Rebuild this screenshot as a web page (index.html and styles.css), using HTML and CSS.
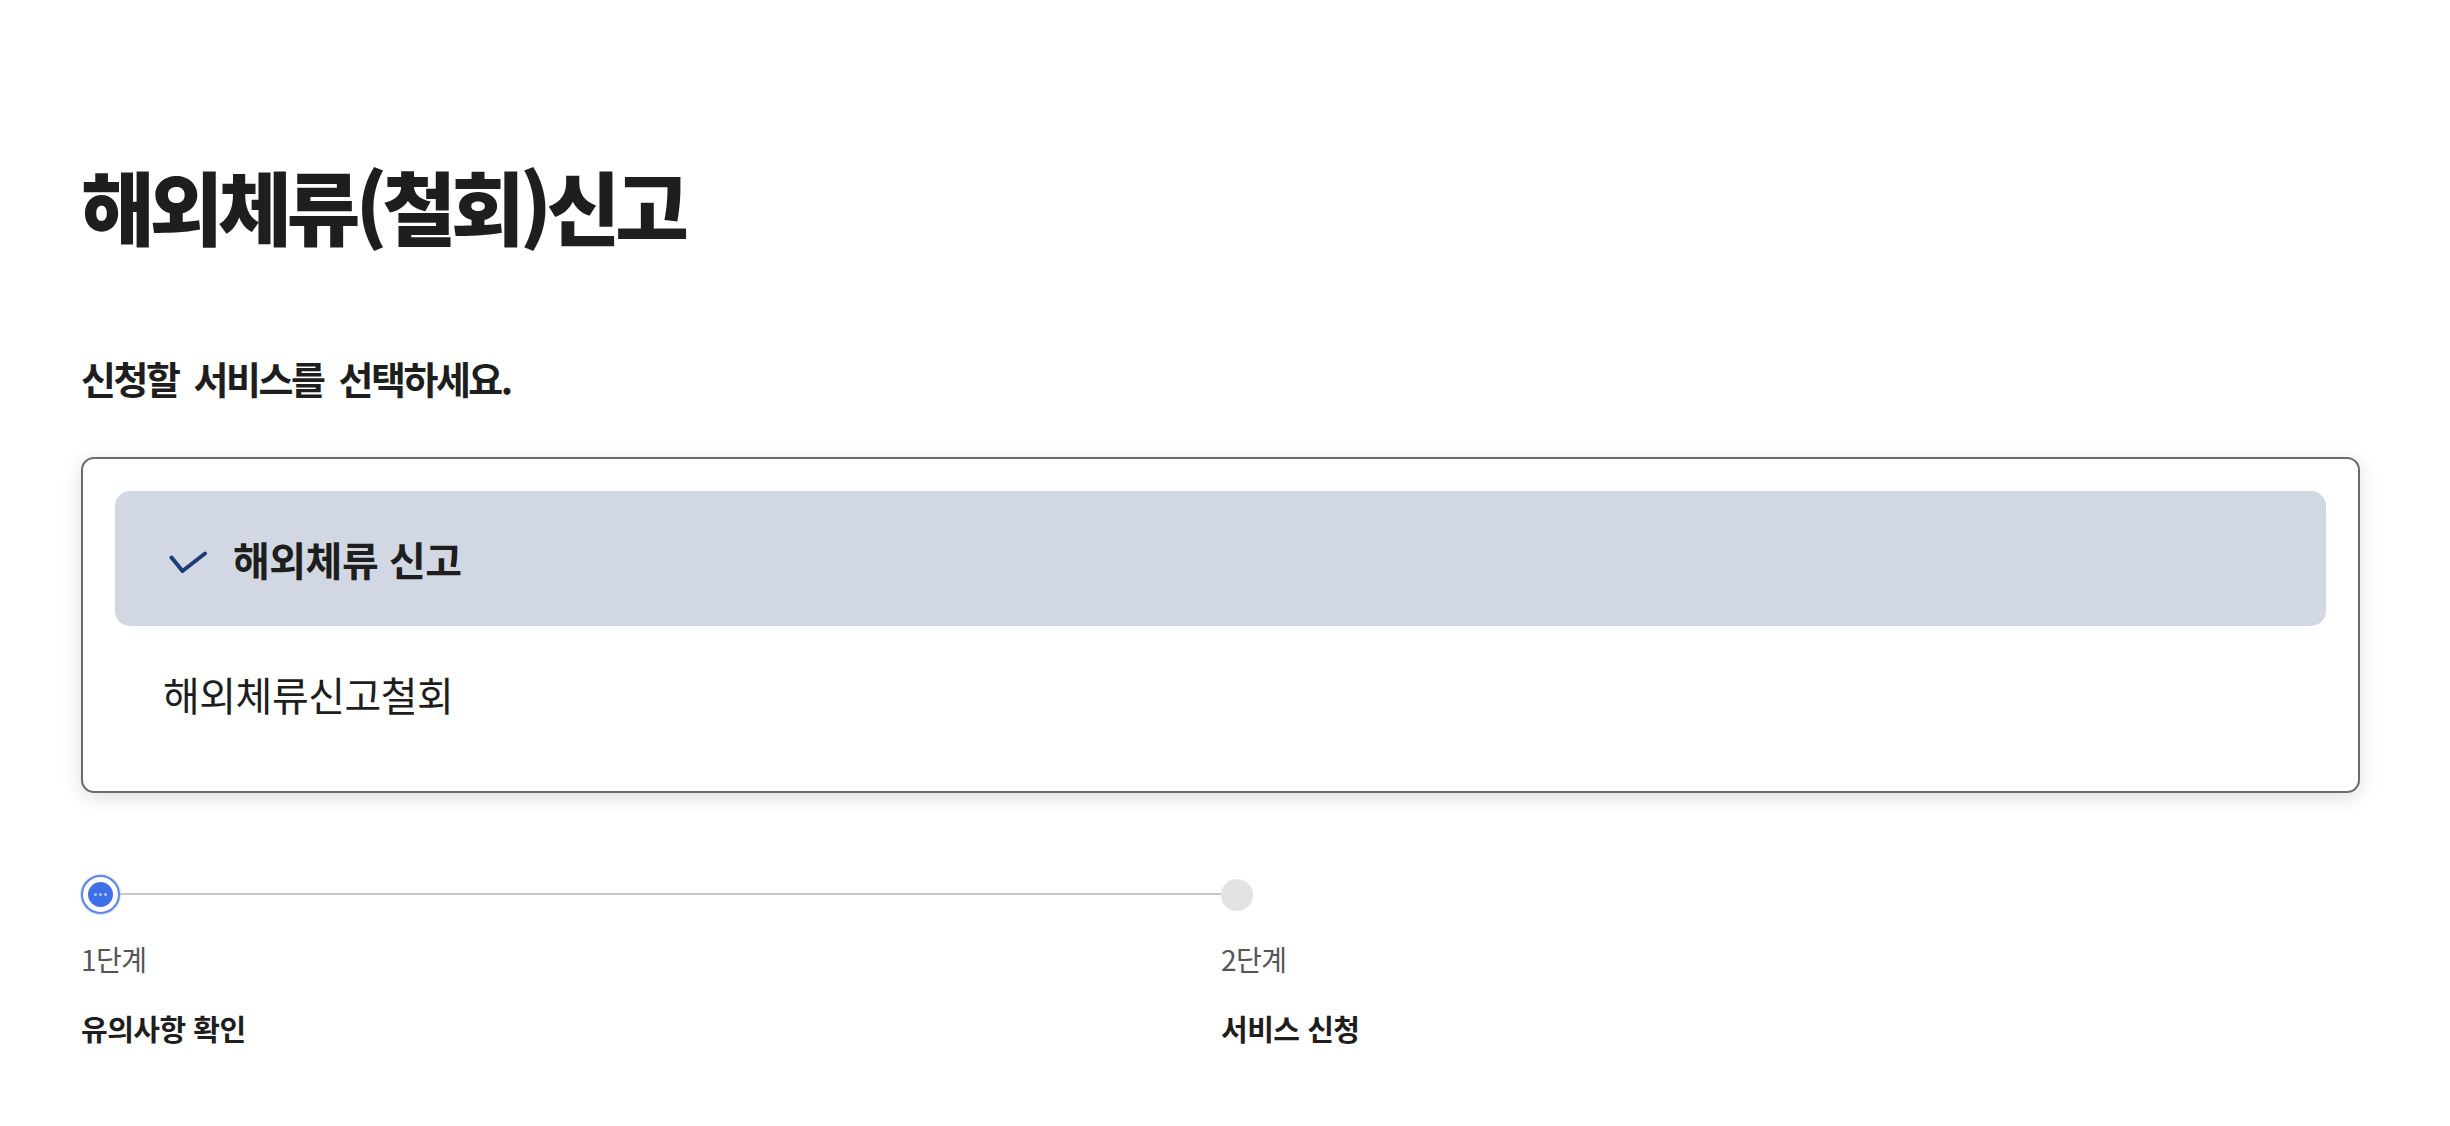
FILE: index.html
```html
<!DOCTYPE html>
<html lang="ko">
<head>
<meta charset="utf-8">
<title>해외체류(철회)신고</title>
<link rel="stylesheet" href="styles.css">
</head>
<body>
<main class="page">
  <h1 class="title">해외체류(철회)신고</h1>
  <p class="subtitle">신청할 서비스를 선택하세요.</p>
  <ul class="listbox" role="listbox">
    <li class="option selected" role="option" aria-selected="true">
      <svg class="check" width="39" height="23" viewBox="0 0 39 23" aria-hidden="true"><path d="M2.5 6.5 L13.5 20 L36 2.5" fill="none" stroke="#1d3c78" stroke-width="4" stroke-linecap="round" stroke-linejoin="round"/></svg>
      <span>해외체류 신고</span>
    </li>
    <li class="option" role="option" aria-selected="false"><span>해외체류신고철회</span></li>
  </ul>
  <ol class="stepper">
    <li class="step current">
      <div class="marker">
        <span class="dot-current"><span class="dot-inner"><i></i><i></i><i></i></span></span>
        <span class="line"></span>
      </div>
      <p class="step-no">1단계</p>
      <p class="step-name">유의사항 확인</p>
    </li>
    <li class="step">
      <div class="marker">
        <span class="dot-next"></span>
      </div>
      <p class="step-no">2단계</p>
      <p class="step-name">서비스 신청</p>
    </li>
  </ol>
</main>
</body>
</html>
```

FILE: styles.css
```css
* { box-sizing: border-box; }
html, body { margin: 0; padding: 0; background: #fff; }
body {
  font-family: "Noto Sans CJK KR", "Noto Sans", sans-serif;
  color: #1e1e1e;
}
.page {
  width: 2279px;
  margin-left: 81px;
  padding-top: 161px;
}
.title {
  margin: 0;
  font-size: 80px;
  line-height: 86px;
  font-weight: 800;
  letter-spacing: -5px;
}
.subtitle {
  margin: 107px 0 0;
  font-size: 38px;
  line-height: 48px;
  font-weight: 700;
  letter-spacing: -2.5px;
  word-spacing: 7px;
}
.listbox {
  list-style: none;
  margin: 55px 0 0;
  padding: 32px 32px 30px;
  border: 2px solid #6b6b6b;
  border-radius: 13px;
  box-shadow: 0 5px 20px rgba(0,0,0,0.13);
  background: #fff;
}
.option {
  height: 135px;
  display: flex;
  align-items: center;
  padding-left: 48px;
  font-size: 40px;
  letter-spacing: -0.5px;
  color: #1e1e1e;
  border-radius: 15px;
}
.option.selected {
  background: #d1d8e3;
  font-weight: 700;
}
.check {
  margin-left: 6px;
  margin-right: 25px;
  margin-top: 7px;
  flex: none;
}
.stepper {
  list-style: none;
  margin: 82px 0 0;
  padding: 0;
  display: grid;
  grid-template-columns: 1140px 1140px;
}
.marker {
  height: 39px;
  display: flex;
  align-items: center;
}
.dot-current {
  width: 39px;
  height: 39px;
  border-radius: 50%;
  border: 2px solid #5a84ea;
  padding: 5px;
  flex: none;
  display: flex;
  box-shadow: 0 0 1px 1px rgba(90,132,234,0.3);
}
.dot-inner {
  width: 25px;
  height: 25px;
  border-radius: 50%;
  background: #3f6fe6;
  display: flex;
  align-items: center;
  justify-content: center;
  gap: 2px;
}
.dot-inner i {
  width: 3px;
  height: 3px;
  border-radius: 50%;
  background: rgba(255,255,255,0.6);
}
.line {
  flex: 1;
  height: 2px;
  background: #c6c6c6;
  margin-top: -2px;
}
.dot-next {
  width: 32px;
  height: 32px;
  border-radius: 50%;
  background: #e3e3e3;
}
.step-no {
  margin: 26px 0 0;
  font-size: 28px;
  line-height: 39px;
  color: #555;
  letter-spacing: -0.5px;
}
.step-name {
  margin: 30px 0 0;
  font-size: 29px;
  line-height: 39px;
  font-weight: 700;
  color: #1e1e1e;
  letter-spacing: -0.5px;
}
```
